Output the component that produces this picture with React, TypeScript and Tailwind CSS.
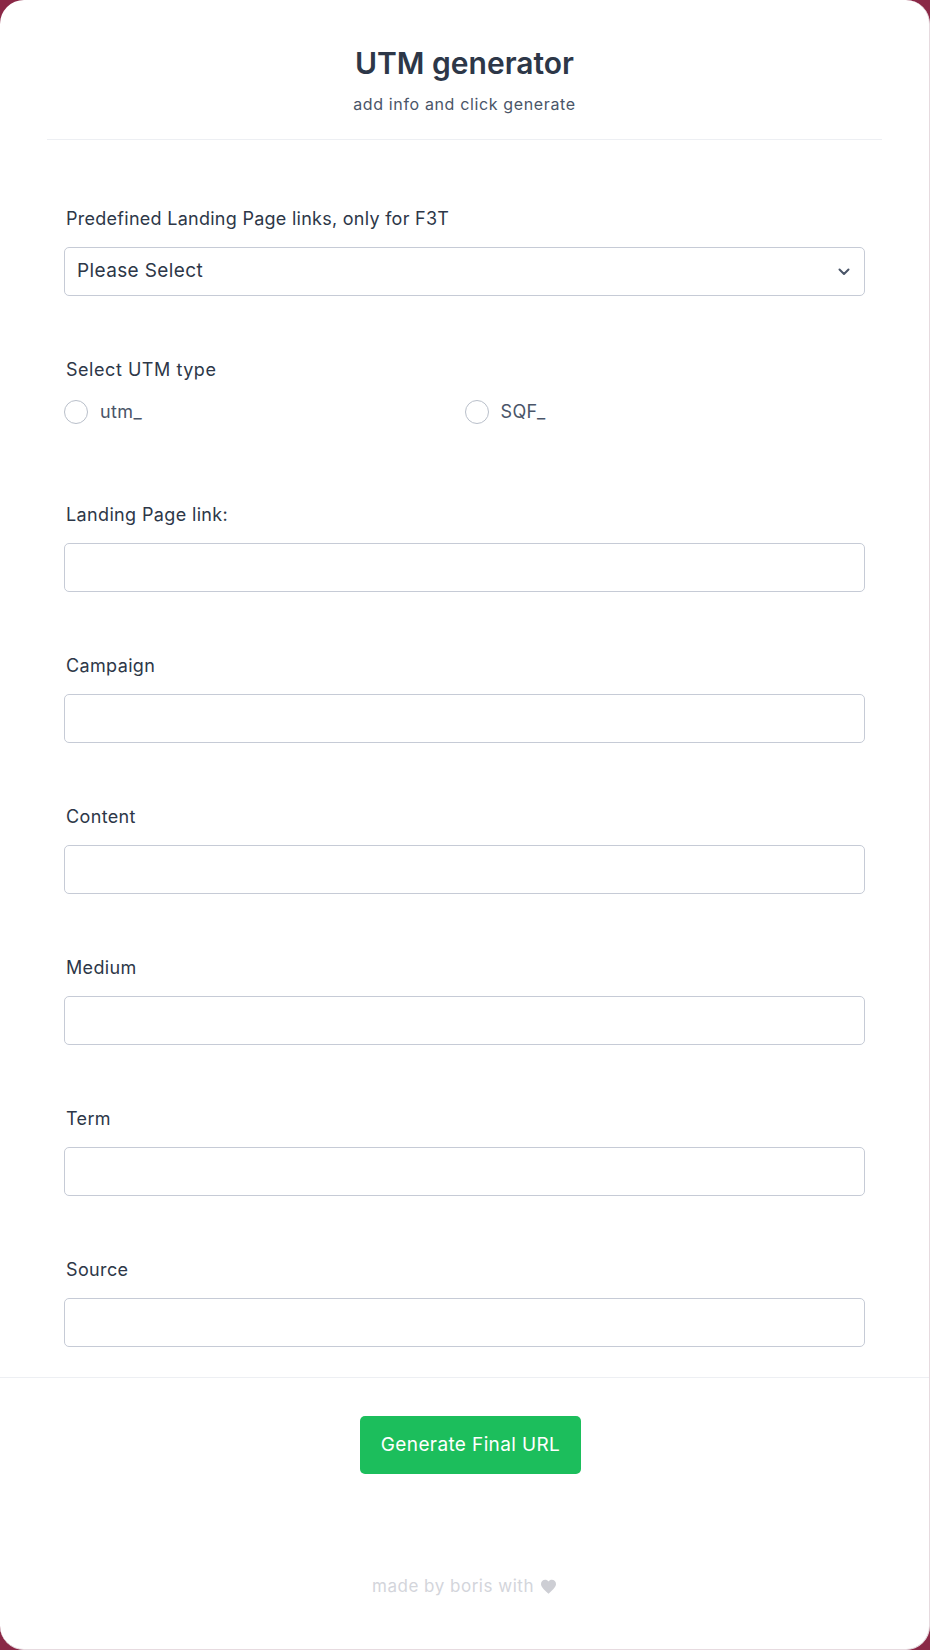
import { useState } from "react";

const fields = ["Landing Page link:", "Campaign", "Content", "Medium", "Term", "Source"];

function Field({ label }: { label: string }) {
  return (
    <div>
      <label className="block pl-[2px] text-[18px] leading-[28px] tracking-[0.02em] text-[#2d3748] mb-[14px]">{label}</label>
      <input
        type="text"
        className="block w-full h-[49px] rounded-[5px] border border-[#c6cbd6] bg-white px-3 text-[18px] text-[#2d3748] outline-none"
      />
    </div>
  );
}

export default function App() {
  const [utmType, setUtmType] = useState("");

  return (
    <div className="w-[930px] h-[1650px] bg-[#8a2846] font-['Inter',sans-serif]">
      <div className="h-full bg-white rounded-[24px] border-r border-b border-[#e6dadf] flex flex-col">
        <header className="mx-[47px] pt-[45px] pb-[23px] border-b border-[#edeff3] text-center">
          <h1 className="text-[30px] leading-[36px] font-semibold text-[#2d3748]">UTM generator</h1>
          <p className="mt-[11px] text-base leading-6 tracking-[0.04em] text-[#4a5568]">add info and click generate</p>
        </header>

        <div className="px-[64px] pt-[65px] pb-[30px]">
          {/* predefined links */}
          <div>
            <label className="block pl-[2px] text-[18px] leading-[28px] tracking-[0.015em] text-[#2d3748] mb-[14px]">
              Predefined Landing Page links, only for F3T
            </label>
            <div className="relative">
              <select className="block w-full h-[49px] appearance-none rounded-[5px] border border-[#c6cbd6] bg-white pl-3 pr-10 text-[19px] tracking-[0.02em] text-[#2d3748] outline-none">
                <option>Please Select</option>
              </select>
              <svg
                className="absolute right-[15px] top-1/2 -translate-y-1/2 pointer-events-none"
                width="12"
                height="8"
                viewBox="0 0 12 8"
                fill="none"
              >
                <path d="M1.5 1.5L6 6l4.5-4.5" stroke="#4a5568" strokeWidth="2" strokeLinecap="round" strokeLinejoin="round" />
              </svg>
            </div>
          </div>

          {/* utm type */}
          <div className="mt-[60px]">
            <label className="block pl-[2px] text-[18px] leading-[28px] tracking-[0.03em] text-[#2d3748] mb-[14px]">Select UTM type</label>
            <div className="grid grid-cols-2 h-[26px]">
              {["utm_", "SQF_"].map((t) => (
                <label key={t} className="flex items-center gap-3 cursor-pointer">
                  <span
                    onClick={() => setUtmType(t)}
                    className={`w-6 h-6 rounded-full border ${
                      utmType === t ? "border-[6px] border-[#1cbe5c]" : "border-[#b9bfca]"
                    } bg-white`}
                  />
                  <span className="text-[18px] tracking-[0.02em] text-[#4a5568]">{t}</span>
                </label>
              ))}
            </div>
          </div>

          <div className="mt-[77px] flex flex-col gap-[60px]">
            {fields.map((f) => (
              <Field key={f} label={f} />
            ))}
          </div>
        </div>

        <div className="border-t border-[#edeff3] pt-[38px] pl-[12px] flex justify-center">
          <button className="h-[58px] px-[21px] rounded-[5px] bg-[#1cbe5c] text-[19px] tracking-[0.02em] text-white">
            Generate Final URL
          </button>
        </div>

        <p className="mt-[100px] text-center text-[17px] leading-6 tracking-[0.03em] text-[#d3d5db] flex items-center justify-center gap-1.5">
          made by boris with
          <svg width="17" height="15" viewBox="0 0 24 22" fill="#cdced4">
            <path d="M12 21.5l-1.6-1.45C4.8 14.9 1 11.5 1 7.3 1 3.9 3.7 1.2 7.1 1.2c1.9 0 3.7.9 4.9 2.3 1.2-1.4 3-2.3 4.9-2.3 3.4 0 6.1 2.7 6.1 6.1 0 4.2-3.8 7.6-9.4 12.75L12 21.5z" />
          </svg>
        </p>
      </div>
    </div>
  );
}
